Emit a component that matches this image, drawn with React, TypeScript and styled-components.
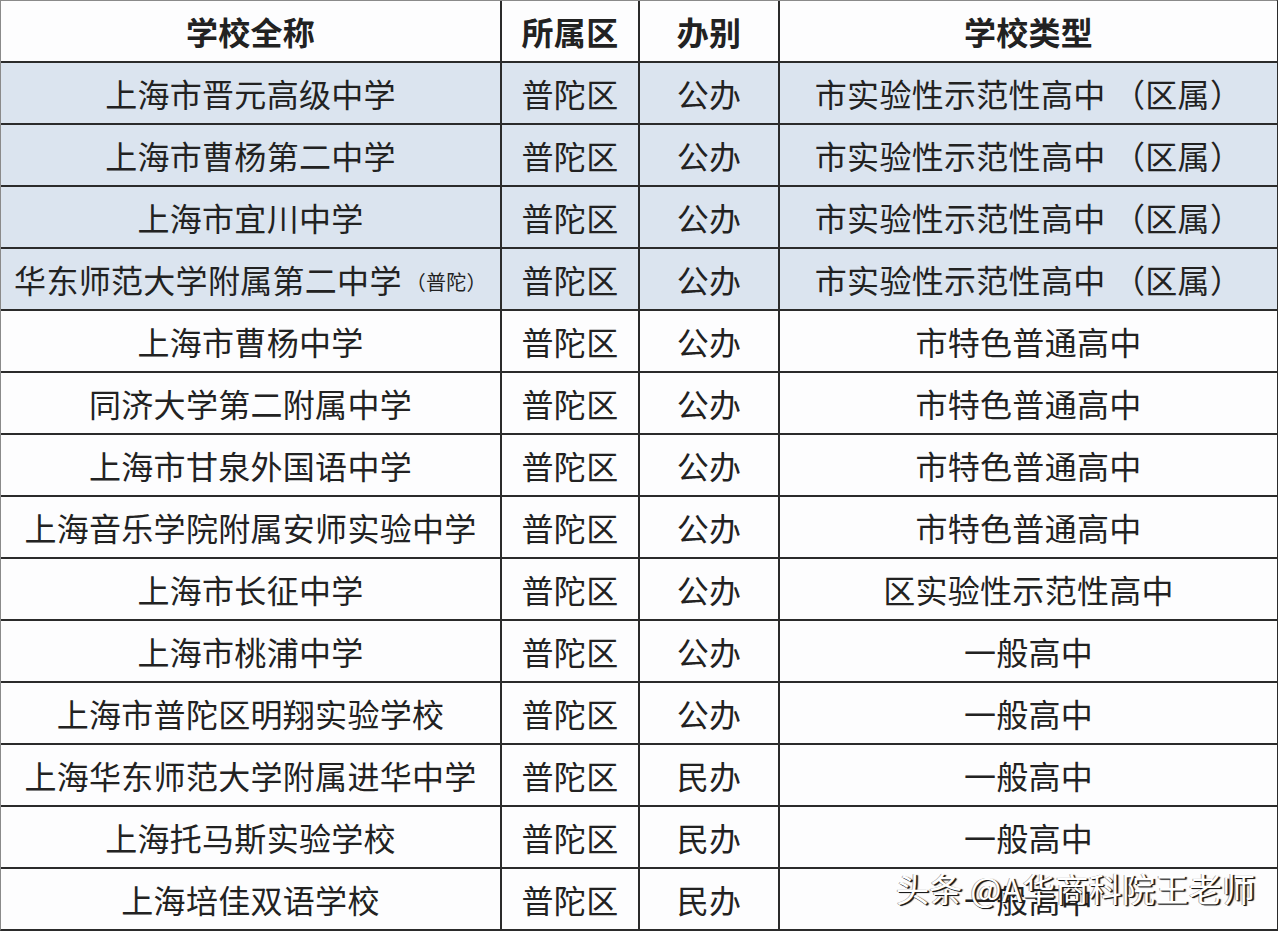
import React from 'react';
import styled, { createGlobalStyle } from 'styled-components';

const GlobalStyle = createGlobalStyle`
    html, body {
        margin: 0;
        padding: 0;
        background: #ffffff;
    }
    body {
        font-family: "Noto Sans CJK SC", "Noto Sans", sans-serif;
    }
`;

const StyledPage = styled.div`
    position: relative;
    width: 1280px;
    height: 932px;
    overflow: hidden;
    background: #fff;
`;

const StyledGrid = styled.div`
    display: grid;
    grid-template-columns: 499px 136px 138px 497px;
    grid-auto-rows: 60px;
    gap: 2px;
    background: #2b2b2b;
    border-top: 1px solid #8a8a8a;
    border-left: 1px solid #8a8a8a;
    border-right: 2px solid #2b2b2b;
    border-bottom: 2px solid #2b2b2b;
    width: 1275px;
`;

const StyledCell = styled.div<{ $shade?: boolean; $head?: boolean }>`
    display: flex;
    align-items: center;
    justify-content: center;
    background: ${(p) => (p.$shade ? '#dbe4ef' : '#fdfdfe')};
    color: #222;
    font-size: 32px;
    font-weight: ${(p) => (p.$head ? 700 : 400)};
    white-space: nowrap;
    overflow: visible;
    letter-spacing: 0.3px;
`;

const StyledNote = styled.span`
    font-size: 20px;
    margin-left: 4px;
    position: relative;
    top: 2px;
`;

const StyledWatermark = styled.div`
    position: absolute;
    left: 896px;
    top: 864px;
    font-size: 33px;
    color: #ffffff;
    white-space: nowrap;
    text-shadow: 1px 1px 0 #1a1a1a, 2px 1px 1px #1a1a1a, -1px 0 0 rgba(0, 0, 0, 0.35);
    letter-spacing: 0.3px;
`;

type Row = { name: string; note?: string; area: string; kind: string; type: string; shade?: boolean };

const TYPE_A = '市实验性示范性高中 （区属）';
const TYPE_B = '市特色普通高中';
const TYPE_C = '一般高中';

const rows: Row[] = [
    { name: '上海市晋元高级中学', area: '普陀区', kind: '公办', type: TYPE_A, shade: true },
    { name: '上海市曹杨第二中学', area: '普陀区', kind: '公办', type: TYPE_A, shade: true },
    { name: '上海市宜川中学', area: '普陀区', kind: '公办', type: TYPE_A, shade: true },
    { name: '华东师范大学附属第二中学', note: '（普陀）', area: '普陀区', kind: '公办', type: TYPE_A, shade: true },
    { name: '上海市曹杨中学', area: '普陀区', kind: '公办', type: TYPE_B },
    { name: '同济大学第二附属中学', area: '普陀区', kind: '公办', type: TYPE_B },
    { name: '上海市甘泉外国语中学', area: '普陀区', kind: '公办', type: TYPE_B },
    { name: '上海音乐学院附属安师实验中学', area: '普陀区', kind: '公办', type: TYPE_B },
    { name: '上海市长征中学', area: '普陀区', kind: '公办', type: '区实验性示范性高中' },
    { name: '上海市桃浦中学', area: '普陀区', kind: '公办', type: TYPE_C },
    { name: '上海市普陀区明翔实验学校', area: '普陀区', kind: '公办', type: TYPE_C },
    { name: '上海华东师范大学附属进华中学', area: '普陀区', kind: '民办', type: TYPE_C },
    { name: '上海托马斯实验学校', area: '普陀区', kind: '民办', type: TYPE_C },
    { name: '上海培佳双语学校', area: '普陀区', kind: '民办', type: TYPE_C },
];

const App = (): JSX.Element => {
    return (
        <StyledPage>
            <GlobalStyle />
            <StyledGrid>
                <StyledCell $head>学校全称</StyledCell>
                <StyledCell $head>所属区</StyledCell>
                <StyledCell $head>办别</StyledCell>
                <StyledCell $head>学校类型</StyledCell>
                {rows.map((r) => (
                    <React.Fragment key={r.name}>
                        <StyledCell $shade={r.shade}>
                            {r.name}
                            {r.note && <StyledNote>{r.note}</StyledNote>}
                        </StyledCell>
                        <StyledCell $shade={r.shade}>{r.area}</StyledCell>
                        <StyledCell $shade={r.shade}>{r.kind}</StyledCell>
                        <StyledCell $shade={r.shade}>{r.type}</StyledCell>
                    </React.Fragment>
                ))}
            </StyledGrid>
            <StyledWatermark>头条 @A华商科院王老师</StyledWatermark>
        </StyledPage>
    );
};

export default App;
